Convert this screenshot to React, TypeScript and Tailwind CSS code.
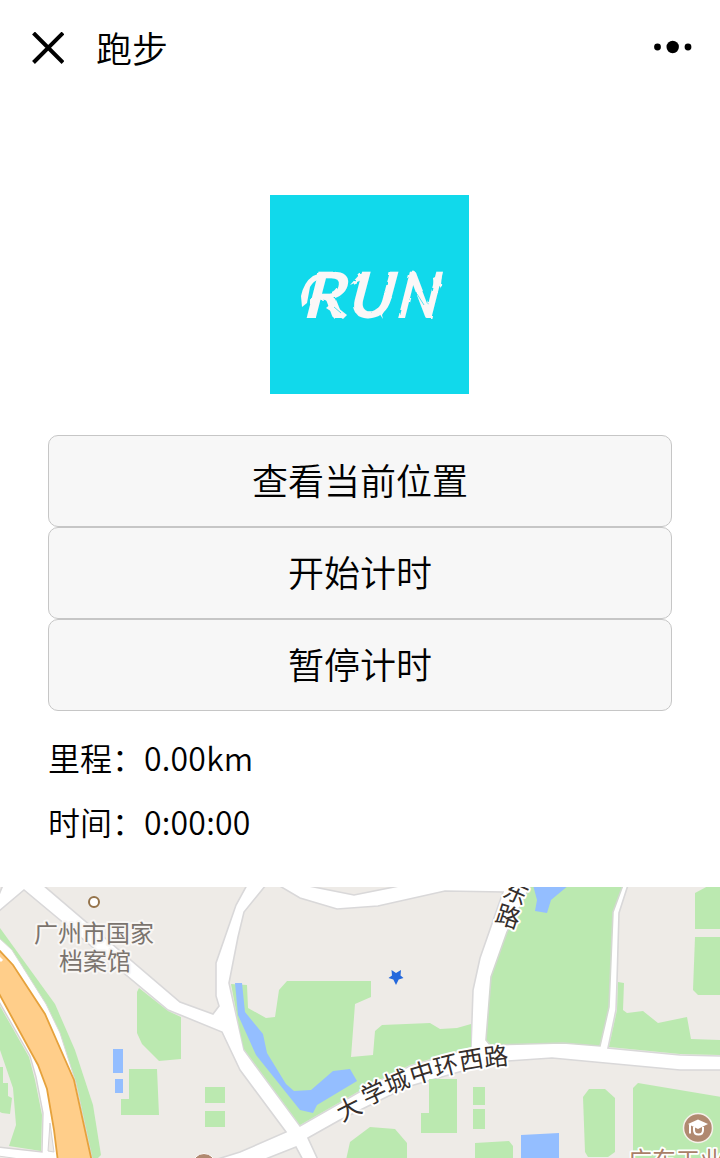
const sans = "font-['Noto_Sans_CJK_SC',sans-serif] font-[350]";

const buttons = ["查看当前位置", "开始计时", "暂停计时"];

const blocks = [
  "-2,897 3,885 -2,880",
  "-2,912 24,890 168,1010 222,1032 240,1070 286,1132 240,1152 208,1162 -2,1162",
  "43,885 180,1002 213,1014 219,1006 216,996 216,963 236,905 247,885",
  "266,885 244,912 238,937 229,983 240,1032 244,1050 300,1126 340,1103 373,1084 410,1066 471,1048 473,990 480,958 503,892 445,891 378,906 337,909 300,898 278,885",
  "304,885 354,895 404,885",
  "628,885 619,913 617,982 616,1010 608,1048 680,1055 722,1056 722,885",
  "308,1138 340,1120 407,1087 480,1066 507,1061 552,1058 680,1070 722,1070 722,1162 319,1162",
  "258,1162 296,1147 304,1162",
];

const greens = [
  "231,984 247,985 248,1008 266,1018 275,1017 279,990 287,981 371,981 371,997 355,1004 351,1057 373,1055 375,1031 382,1025 430,1023 440,1029 457,1028 471,1024 471,1047 410,1065 373,1083 340,1102 300,1125 244,1049 240,1031",
  "137,992 139,988 168,1011 181,1017 181,1059 159,1061 142,1044 137,1033",
  "129,1069 157,1069 159,1115 121,1115 121,1099 129,1099",
  "205,1087 225,1087 225,1103 205,1103",
  "205,1111 225,1111 225,1127 205,1127",
  "429,1079 457,1079 457,1133 421,1133 421,1113 429,1113",
  "473,1087 485,1087 485,1105 473,1105",
  "473,1109 485,1109 485,1129 473,1129",
  "475,1143 509,1141 513,1146 513,1160 475,1160",
  "346,1160 350,1142 370,1127 395,1129 407,1143 407,1160",
  "583,1097 589,1089 605,1089 615,1098 615,1152 608,1157 588,1157 585,1152",
  "633,1088 638,1083 722,1097 722,1160 633,1160",
  "695,893 710,885 722,885 722,929 695,929",
  "695,937 722,937 722,995 698,995 693,990",
  "618,982 624,983 623,1010 627,1013 643,1011 658,1023 687,1017 691,1039 722,1040 722,1055 680,1054 609,1047 617,1010",
  "0,928 55,1004 75,1050 93,1105 101,1155 96,1160 60,1160 0,1000",
];

const waters = [
  "235,983 242,983 245,1012 263,1034 267,1053 286,1084 294,1091 311,1090 333,1071 350,1069 357,1081 317,1105 313,1113 300,1110 256,1055 238,1015",
  "533,885 537,900 535,911 547,913 551,900 569,885",
  "113,1049 123,1049 123,1073 113,1073",
  "115,1079 123,1079 123,1093 115,1093",
  "521,1135 559,1133 559,1160 521,1160",
];

const roadChars = [
  { c: "大", x: 349, y: 1109, r: -27 },
  { c: "学", x: 374, y: 1093, r: -25 },
  { c: "城", x: 397, y: 1082, r: -22 },
  { c: "中", x: 422, y: 1073, r: -17 },
  { c: "环", x: 446, y: 1066, r: -14 },
  { c: "西", x: 471, y: 1060, r: -10 },
  { c: "路", x: 496, y: 1057, r: -6 },
  { c: "东", x: 516, y: 893, r: 24 },
  { c: "路", x: 508, y: 917, r: 18 },
];

function CampusMap() {
  return (
    <svg
      className="block h-[271px] w-full font-['Noto_Sans_CJK_SC',sans-serif] font-normal"
      viewBox="0 887 720 271"
    >
      <rect x="0" y="887" width="720" height="271" fill="#ffffff" />
      <g fill="#eeebe7" stroke="#d9d8d9" strokeWidth="1.6">
        {blocks.map((p) => (
          <polygon key={p} points={p} />
        ))}
      </g>
      <polygon
        points="531,885 507,932 491,977 486,1040 490,1045 563,1043 600,1046 609,1007 613,912 623,885"
        fill="#bbe9b0"
        stroke="#d3d8d0"
        strokeWidth="1.6"
      />
      <g fill="#bbe9b0">
        {greens.map((p) => (
          <polygon key={p} points={p} />
        ))}
      </g>
      <g fill="#94beff">
        {waters.map((p) => (
          <polygon key={p} points={p} />
        ))}
      </g>

      {/* expressway and its service roads */}
      <polygon
        points="-2,937 12,950 46,1004 60,1033 76,1083 93,1162 -2,1162"
        fill="#ffffff"
        stroke="#d9d9d5"
        strokeWidth="1"
      />
      <polygon
        points="-2,1000 30,1056 36,1077 43,1113 42,1152 -2,1147"
        fill="#eeebe7"
        stroke="#d6d4d4"
        strokeWidth="1.4"
      />
      <polygon
        points="0,1006 29,1057 35,1080 42,1115 41,1151 9,1146 16,1125 13,1088 0,1050"
        fill="#bbe9b0"
      />
      <polygon
        points="0,1067 3,1067 3,1083 8,1083 8,1096 12,1098 10,1114 2,1113 0,1112"
        fill="#bbe9b0"
      />
      <polygon points="50,1123 48,1151 54,1152" fill="#eeebe7" stroke="#d6d4d4" />
      <polygon points="-2,1156 20,1159 -2,1162" fill="#eeebe7" stroke="#d6d4d4" />
      <polygon
        points="-3,948 13,965 45,1014 74,1080 92,1162 58,1162 54,1130 47,1089 38,1065 -3,990"
        fill="#ffce8a"
        stroke="#e6a23c"
        strokeWidth="1.8"
      />
      <path d="M-1 958l3 3" stroke="#fff" strokeWidth="3" />

      {/* archive marker */}
      <circle cx="94" cy="902" r="5" fill="#fff" stroke="#94734a" strokeWidth="2" />
      <g
        fill="#7b746e"
        stroke="#f8f6f4"
        strokeWidth="4"
        strokeLinejoin="round"
        paintOrder="stroke"
        fontSize="24"
      >
        <text x="34" y="942">广州市国家</text>
        <text x="59" y="970">档案馆</text>
      </g>

      <g
        fill="#352e2b"
        stroke="#ffffff"
        strokeWidth="4"
        strokeLinejoin="round"
        paintOrder="stroke"
        fontSize="24.500"
        textAnchor="middle"
      >
        {roadChars.map((g) => (
          <text key={g.c + g.x} transform={`translate(${g.x} ${g.y}) rotate(${g.r})`} y="8.500">
            {g.c}
          </text>
        ))}
      </g>

      <polygon
        points="391.500,970 396,973 401,970 400.500,975.500 403.500,978 398.700,979.500 396,985 393.300,979.500 388.500,978 392,975.500"
        fill="#2468dc"
      />

      <circle cx="204" cy="1165" r="11.500" fill="#b08970" stroke="#fff" strokeWidth="1" />

      {/* university marker */}
      <circle cx="698" cy="1128" r="14.500" fill="#b08970" stroke="#f6f0ea" strokeWidth="1.5" />
      <path d="M698 1119.500l10 4.500-10 5-10-5z" fill="#fff" />
      <path
        d="M690 1124.500v9M694 1127v3q0 4.500 4.500 4.500t4.500-4.500v-3"
        fill="none"
        stroke="#fff"
        strokeWidth="2"
      />
      <text
        x="628"
        y="1169"
        fontSize="24"
        fill="#a97f68"
        stroke="#ffffff"
        strokeWidth="3.500"
        strokeLinejoin="round"
        paintOrder="stroke"
      >
        广东工业
      </text>
    </svg>
  );
}

function RunLogo() {
  return (
    <svg className="ml-[18px] block size-[199px]" viewBox="0 0 199 199">
      <defs>
        <filter id="brush" x="-10%" y="-10%" width="120%" height="120%">
          <feTurbulence type="fractalNoise" baseFrequency="0.1 0.08" numOctaves="2" seed="11" />
          <feDisplacementMap in="SourceGraphic" scale="2.500" />
        </filter>
      </defs>
      <rect width="199" height="199" fill="#11d9eb" />
      <g filter="url(#brush)" fill="#fbf7f7">
        <g className="font-['Lato',sans-serif] font-bold italic" fontSize="64">
          <text transform="translate(34 123) skewX(-7)" textLength="42" lengthAdjust="spacingAndGlyphs">
            R
          </text>
          <text transform="translate(78 123) skewX(-8)" textLength="45" lengthAdjust="spacingAndGlyphs">
            U
          </text>
          <text transform="translate(126 123) skewX(-8)" textLength="42" lengthAdjust="spacingAndGlyphs">
            N
          </text>
        </g>
        {/* loose brush ends around the lettering */}
        <path d="M32 112l-1-11q3-14 12-20l10-4 0 5q-10 4-13 10l-3 16z" />
        <path d="M62 108l15 12-4 4-17-11z" />
        <path d="M80 90l10-11 8-1-4 6z" />
        <path d="M114 103l8-1-10 18 1 4-4-6z" />
        <path d="M163 83l9-4-1 11-7 5z" />
      </g>
      <g stroke="#11d9eb" strokeWidth="0.7" fill="none">
        <path d="M64 112l7 6M108 108l7-12M147 99l7 11" />
      </g>
    </svg>
  );
}

export default function App() {
  return (
    <main className={`flex h-[1158px] w-[720px] flex-col overflow-hidden bg-white text-black ${sans}`}>
      <header className="flex h-[96px] shrink-0 items-center justify-between pr-[28px] pl-[32px]">
        <div className="flex items-center gap-8">
          <svg className="size-8" viewBox="0 0 32 32" stroke="#000" strokeWidth="4">
            <path d="M1.500 1l29.500 29.500M31 1l-29.500 29.500" />
          </svg>
          <h1 className="pb-[2px] text-[36px] leading-[46px]">跑步</h1>
        </div>
        <svg className="h-4 w-10" viewBox="0 0 40 16">
          <circle cx="5.500" cy="7" r="3.400" />
          <circle cx="20.700" cy="7" r="6.200" />
          <circle cx="36" cy="7" r="3.400" />
        </svg>
      </header>
      <div className="flex h-[339px] shrink-0 justify-center pt-[99px]">
        <RunLogo />
      </div>
      <div className="flex shrink-0 flex-col px-12">
        {buttons.map((label) => (
          <button
            key={label}
            className="h-[92px] rounded-[10px] border border-[#c6c6c6] bg-[#f7f7f7] pb-1 text-[36px] leading-[86px]"
          >
            {label}
          </button>
        ))}
      </div>
      <div className="flex h-[176px] shrink-0 flex-col px-12 pt-[14px] text-[32px] leading-[64px]">
        <p>
          里程：<span className="tracking-[0.2px]">0.00km</span>
        </p>
        <p>
          时间：<span className="tracking-[0.2px]">0:00:00</span>
        </p>
      </div>
      <CampusMap />
    </main>
  );
}
